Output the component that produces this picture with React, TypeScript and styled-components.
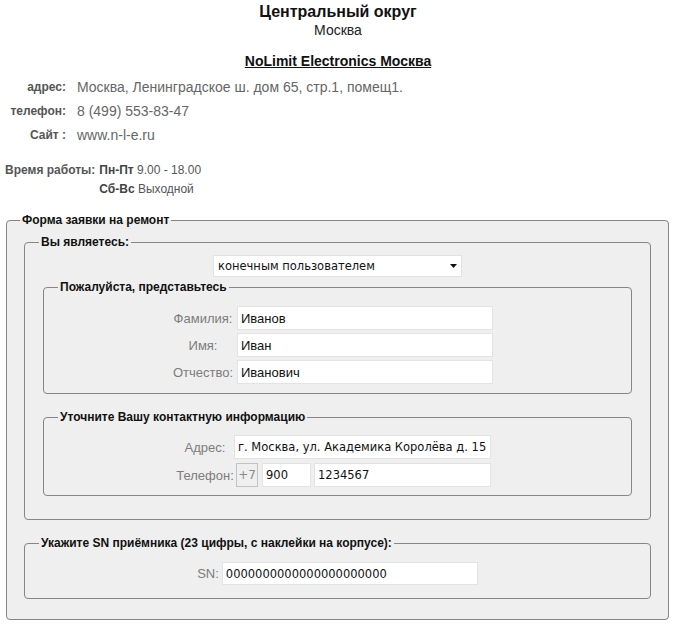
import React, { useEffect, useRef } from "react";
import styled, { createGlobalStyle } from "styled-components";

const GlobalStyle = createGlobalStyle`
  html, body {
    margin: 0;
    padding: 0;
    background: #fff;
  }

  body {
    font-family: "Liberation Sans", Arial, sans-serif;
    color: #222;
  }
`;

const Page = styled.div`
  width: 676px;
  padding: 2px 0 8px;
`;

const Header = styled.header`
  text-align: center;
`;

const Region = styled.h1`
  margin: 0;
  font-size: 16px;
  line-height: 20px;
  font-weight: bold;
  color: #111;
`;

const City = styled.div`
  font-size: 14px;
  line-height: 16px;
  color: #222;
`;

const Company = styled.h2`
  margin: 15px 0 0;
  font-size: 14px;
  line-height: 17px;
  font-weight: bold;
  text-decoration: underline;
  color: #111;
`;

const InfoList = styled.dl`
  display: grid;
  grid-template-columns: 66px auto;
  column-gap: 11px;
  margin: 5px 0 0;
`;

const InfoLabel = styled.dt`
  text-align: right;
  font-size: 12px;
  line-height: 24px;
  font-weight: bold;
  color: #555;
`;

const InfoValue = styled.dd`
  margin: 0;
  font-size: 14px;
  line-height: 24px;
  color: #666;
`;

const Hours = styled.div`
  display: grid;
  grid-template-columns: auto 1fr;
  column-gap: 4px;
  margin: 14px 0 0 5px;
  font-size: 12px;
  line-height: 19px;
  color: #555;
  white-space: nowrap;
`;

const HoursTitle = styled.span`
  font-weight: bold;
  color: #555;
`;

const Days = styled.b`
  color: #444;
`;

const HoursLine = styled.div`
  grid-column: 2;
`;

const Fieldset = styled.fieldset<{ $outer?: boolean; $pt: number; $pb: number; $mt?: number }>`
  min-width: 0;
  margin: ${(p) => (p.$outer ? "14px 7px 0 6px" : `${p.$mt ?? 0}px 0 0`)};
  padding: ${(p) => p.$pt}px ${(p) => (p.$outer ? 17 : 18)}px ${(p) => p.$pb}px;
  border: 1px solid #868686;
  border-radius: 4px;
  background: ${(p) => (p.$outer ? "#efefef" : "transparent")};
`;

const Legend = styled.legend`
  margin-left: -4px;
  padding: 0 2px;
  font: bold 12px/14px "Liberation Sans", Arial, sans-serif;
  color: #111;
`;

const SelectRow = styled.div`
  display: flex;
  justify-content: center;
  margin-bottom: 3px;
`;

const SelectBox = styled.div`
  position: relative;
  width: 249px;
  height: 22px;
`;

const Select = styled.select`
  appearance: none;
  box-sizing: border-box;
  width: 100%;
  height: 100%;
  margin: 0;
  padding: 0 0 0 4px;
  border: 1px solid #e2e2e2;
  border-radius: 0;
  background: #fff;
  font: 11.5px "DejaVu Sans", Verdana, sans-serif;
  color: #111;
  outline: none;
`;

const Arrow = styled.svg`
  position: absolute;
  right: 5px;
  top: 9px;
  pointer-events: none;
`;

const FieldGrid = styled.div<{ $indent: number; $label: number; $colGap: number; $rowGap: number }>`
  display: grid;
  grid-template-columns: ${(p) => p.$label}px auto;
  column-gap: ${(p) => p.$colGap}px;
  row-gap: ${(p) => p.$rowGap}px;
  margin-left: ${(p) => p.$indent}px;
  align-items: center;
`;

const Label = styled.label`
  text-align: center;
  font-size: 13px;
  color: #7c7c7c;
`;

const TextInput = styled.input<{ $w: number; $h?: number; $font?: "arial" | "dejavu"; $size?: number }>`
  box-sizing: border-box;
  width: ${(p) => p.$w}px;
  height: ${(p) => p.$h ?? 24}px;
  margin: 0;
  padding: 0 2px 0 3px;
  border: 1px solid #e3e3e3;
  border-radius: 0;
  background: #fff;
  font-family: ${(p) =>
    p.$font === "dejavu" ? `"DejaVu Sans", Verdana, sans-serif` : `"Liberation Sans", Arial, sans-serif`};
  font-size: ${(p) => p.$size ?? 13}px;
  color: #111;
  caret-color: #000;
  outline: none;
`;

const PhoneRow = styled.div`
  display: flex;
  align-items: center;
  margin-left: 2px;
`;

const Prefix = styled.span`
  box-sizing: border-box;
  width: 22px;
  height: 24px;
  margin-right: 4px;
  border: 1px solid #c2c2c2;
  background: #efefef;
  font: 12px/22px "DejaVu Sans", Verdana, sans-serif;
  color: #8a8a8a;
  text-align: center;
`;

const PhoneGap = styled.span`
  width: 3px;
`;

const SnRow = styled.div`
  display: flex;
  justify-content: center;
  align-items: center;
  gap: 3px;
`;

const App = () => {
  const snRef = useRef<HTMLInputElement>(null);

  useEffect(() => {
    const el = snRef.current;
    if (el) {
      el.focus();
      el.setSelectionRange(el.value.length, el.value.length);
    }
  }, []);

  return (
    <Page>
      <GlobalStyle />
      <Header>
        <Region>Центральный округ</Region>
        <City>Москва</City>
        <Company>NoLimit Electronics Москва</Company>
      </Header>

      <InfoList>
        <InfoLabel>адрес:</InfoLabel>
        <InfoValue>Москва, Ленинградское ш. дом 65, стр.1, помещ1.</InfoValue>
        <InfoLabel>телефон:</InfoLabel>
        <InfoValue>8 (499) 553-83-47</InfoValue>
        <InfoLabel>Сайт :</InfoLabel>
        <InfoValue>www.n-l-e.ru</InfoValue>
      </InfoList>

      <Hours>
        <HoursTitle>Время работы:</HoursTitle>
        <HoursLine>
          <Days>Пн-Пт</Days> 9.00 - 18.00
        </HoursLine>
        <HoursLine>
          <Days>Сб-Вс</Days> Выходной
        </HoursLine>
      </Hours>

      <form onSubmit={(e) => e.preventDefault()}>
        <Fieldset $outer $pt={8} $pb={20}>
          <Legend>Форма заявки на ремонт</Legend>

          <Fieldset $pt={6} $pb={23}>
            <Legend>Вы являетесь:</Legend>
            <SelectRow>
              <SelectBox>
                <Select defaultValue="user">
                  <option value="user">конечным пользователем</option>
                  <option value="dealer">дилером</option>
                </Select>
                <Arrow width="7" height="4" viewBox="0 0 7 4">
                  <path d="M0 0h7L3.5 4z" fill="#111" />
                </Arrow>
              </SelectBox>
            </SelectRow>

            <Fieldset $pt={12} $pb={9}>
              <Legend>Пожалуйста, представьтесь</Legend>
              <FieldGrid $indent={108} $label={66} $colGap={1} $rowGap={3}>
                <Label>Фамилия:</Label>
                <TextInput $w={256} defaultValue="Иванов" />
                <Label>Имя:</Label>
                <TextInput $w={256} defaultValue="Иван" />
                <Label>Отчество:</Label>
                <TextInput $w={256} defaultValue="Иванович" />
              </FieldGrid>
            </Fieldset>

            <Fieldset $mt={16} $pt={11} $pb={8}>
              <Legend>Уточните Вашу контактную информацию</Legend>
              <FieldGrid $indent={114} $label={58} $colGap={0} $rowGap={4}>
                <Label>Адрес:</Label>
                <TextInput $w={257} $font="dejavu" $size={11.5} defaultValue="г. Москва, ул. Академика Королёва д. 15" />
                <Label>Телефон:</Label>
                <PhoneRow>
                  <Prefix>+7</Prefix>
                  <TextInput $w={49} $font="dejavu" $size={11.5} defaultValue="900" />
                  <PhoneGap />
                  <TextInput $w={177} $font="dejavu" $size={11.5} defaultValue="1234567" />
                </PhoneRow>
              </FieldGrid>
            </Fieldset>
          </Fieldset>

          <Fieldset $mt={16} $pt={12} $pb={13}>
            <Legend>Укажите SN приёмника (23 цифры, с наклейки на корпусе):</Legend>
            <SnRow>
              <Label>SN:</Label>
              <TextInput
                ref={snRef}
                $w={256}
                $h={23}
                $font="dejavu"
                $size={11.5}
                defaultValue="0000000000000000000000"
              />
            </SnRow>
          </Fieldset>
        </Fieldset>
      </form>
    </Page>
  );
};

export default App;
